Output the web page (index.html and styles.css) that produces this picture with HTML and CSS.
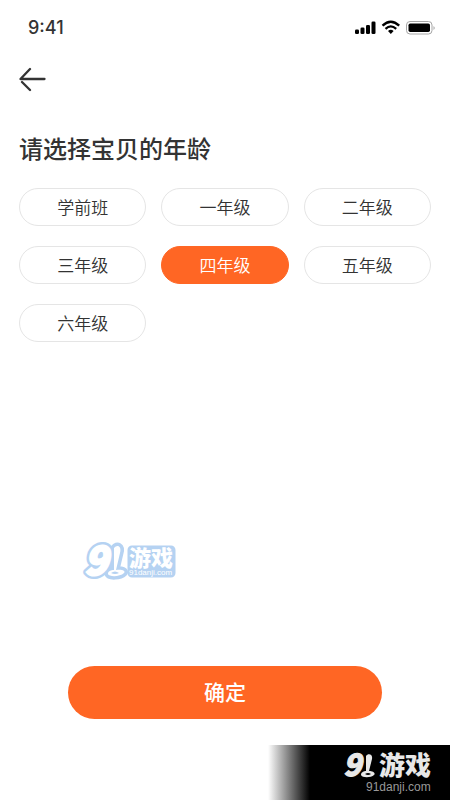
FILE: index.html
```html
<!DOCTYPE html>
<html lang="zh-CN">
<head>
<meta charset="utf-8">
<meta name="viewport" content="width=device-width, initial-scale=1">
<title>请选择宝贝的年龄</title>
<link rel="stylesheet" href="styles.css">
</head>
<body>
<div class="screen">
  <header class="status">
    <span class="time">9:41</span>
    <svg class="status-icons" width="82" height="16" viewBox="0 0 82 16" aria-hidden="true">
      <rect x="1" y="9.500" width="4" height="4.500" rx="1.3"/>
      <rect x="6.500" y="7.500" width="4" height="6.500" rx="1.3"/>
      <rect x="12" y="5" width="4" height="9" rx="1.3"/>
      <rect x="17.500" y="1.500" width="4" height="12.500" rx="1.3"/>
      <path d="M28.500 5.700Q36.800-2.300 45.200 5.700" fill="none" stroke="#000" stroke-width="2.300"/>
      <path d="M31.500 8.900Q36.800 3.900 42.200 8.900" fill="none" stroke="#000" stroke-width="2.200"/>
      <path d="M34 11Q36.800 8.700 39.600 11L36.800 14Z"/>
      <rect x="52.500" y="1.500" width="25.500" height="12.500" rx="3.500" fill="none" stroke="#a6a6a6"/>
      <rect x="54.500" y="3.500" width="21.500" height="8.500" rx="1.700"/>
      <path d="M79.500 6Q82 8 79.500 10Z" fill="#a6a6a6"/>
    </svg>
  </header>
  <nav class="nav">
    <button class="back" type="button" aria-label="返回">
      <svg width="28" height="26" viewBox="0 0 28 26" aria-hidden="true">
        <path d="M11 3L1.500 13H25.500M3 16L11 24" fill="none" stroke="#333" stroke-width="2.300" stroke-linecap="round" stroke-linejoin="round"/>
      </svg>
    </button>
  </nav>
  <form class="form">
    <h1 class="title" id="title">请选择宝贝的年龄</h1>
    <div class="grades" role="radiogroup" aria-labelledby="title">
      <label class="grade"><input type="radio" name="grade" value="0"><span>学前班</span></label>
      <label class="grade"><input type="radio" name="grade" value="1"><span>一年级</span></label>
      <label class="grade"><input type="radio" name="grade" value="2"><span>二年级</span></label>
      <label class="grade"><input type="radio" name="grade" value="3"><span>三年级</span></label>
      <label class="grade"><input type="radio" name="grade" value="4" checked><span>四年级</span></label>
      <label class="grade"><input type="radio" name="grade" value="5"><span>五年级</span></label>
      <label class="grade"><input type="radio" name="grade" value="6"><span>六年级</span></label>
    </div>
    <svg class="mark" width="98" height="40" viewBox="0 0 98 40">
      <g class="mark-back">
        <text class="nine" x="2" y="33" font-size="39">9</text>
        <path d="M32 6C35 2 40 4 38 11L34 28C40 27 44 29 42 31C38 35 27 35 26 32C26 29 29 28 32 28Z"/>
        <rect x="49" y="7" width="41" height="25" rx="1"/>
      </g>
      <g class="mark-front">
        <text class="nine heavy" x="2" y="33" font-size="39">9</text>
        <path fill-rule="evenodd" d="M32 6C35 2 40 4 38 11L34 28C40 27 44 29 42 31C38 35 27 35 26 32C26 29 29 28 32 28ZM29 31Q33 28 37 31Q33 33 29 31Z"/>
        <text class="name" x="47" y="24" font-size="22">游戏</text>
        <text class="site" x="47" y="33" font-size="8">91danji.com</text>
      </g>
    </svg>
    <button class="confirm" type="submit">确定</button>
  </form>
  <footer class="footer">
    <svg class="brand" width="90" height="44" viewBox="0 0 90 44">
      <text class="nine heavy" x="-1" y="23" font-size="30">9</text>
      <path d="M22 3C24 0 29 1 28 6L25 18C29 18 32 20 30 22C27 25 18 25 17 22C17 19 20 18 22 18ZM21 21Q24 19 27 21Q24 23 21 21Z" fill-rule="evenodd"/>
      <text class="name" x="35" y="22" font-size="26">游戏</text>
      <text class="site" x="22" y="38" font-size="12">91danji.com</text>
    </svg>
  </footer>
</div>
</body>
</html>
```
FILE: styles.css
```css
* {
  box-sizing: border-box;
}

body {
  margin: 0;
  background: #fff;
  color: #333;
  font-family: "Noto Sans CJK SC", sans-serif;
}

.screen {
  display: flex;
  flex-direction: column;
  min-height: 100vh;
}

.status {
  display: flex;
  align-items: center;
  justify-content: space-between;
  height: 56px;
  padding: 0 14px 0 28px;
}

.time {
  font: 500 18px/24px Inter, sans-serif;
}

.nav {
  height: 48px;
  padding: 10px 19px;
}

.back {
  display: block;
  padding: 0;
  border: 0;
  background: none;
  cursor: pointer;
}

.back svg {
  display: block;
}

.form {
  display: flex;
  flex: 1;
  flex-direction: column;
  padding: 26px 19px;
}

.title {
  margin: 0 0 22px;
  font-size: 24px;
  font-weight: 500;
  line-height: 36px;
}

.grades {
  display: grid;
  grid-template-columns: repeat(3, 1fr);
  gap: 20px 15px;
}

.grade {
  position: relative;
  display: flex;
  align-items: center;
  justify-content: center;
  height: 38px;
  border: 1px solid #e5e5e5;
  border-radius: 19px;
  font-size: 17px;
  font-weight: 350;
  line-height: 24px;
  cursor: pointer;
}

.grade input {
  position: absolute;
  inset: 0;
  margin: 0;
  opacity: 0;
  cursor: pointer;
}

.grade:has(input:checked) {
  border-color: #ff6624;
  background: #ff6624;
  color: #fff;
}

.mark {
  margin: auto 0 84px 63px;
  overflow: visible;
}

.mark-back {
  fill: #b5d2f2;
  stroke: #b5d2f2;
  stroke-width: 7px;
  stroke-linejoin: round;
}

.mark-front {
  fill: #fff;
}

.nine {
  font-family: "Noto Sans CJK SC", sans-serif;
  font-style: italic;
  font-weight: 900;
}

.mark .heavy {
  stroke: #fff;
  stroke-width: 2px;
}

.brand .heavy {
  stroke: #e8e8e8;
  stroke-width: 1px;
}

.name {
  font-family: "Noto Sans CJK SC", sans-serif;
  font-weight: 900;
}

.site {
  font-family: "Liberation Sans", sans-serif;
}

.confirm {
  width: 76%;
  height: 53px;
  margin: 0 auto;
  padding: 0 0 4px;
  border: 0;
  border-radius: 27px;
  background: #ff6624;
  color: #fff;
  font: 500 21px/32px "Noto Sans CJK SC", sans-serif;
  cursor: pointer;
}

.footer {
  display: flex;
  justify-content: flex-end;
  width: 182px;
  height: 55px;
  margin-left: auto;
  padding: 8px 16px 0 0;
  background: linear-gradient(90deg, #fff, #000 42px);
}

.brand {
  overflow: visible;
  fill: #e8e8e8;
}

.brand .site {
  fill: #999;
}
```
